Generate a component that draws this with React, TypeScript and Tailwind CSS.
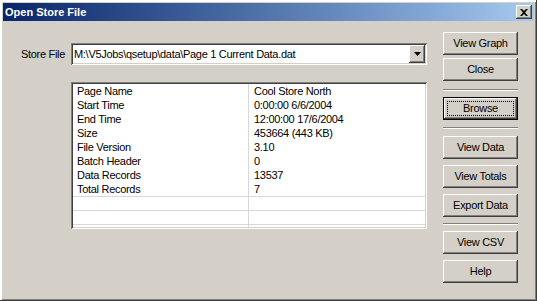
import React from 'react';

const raised =
  'shadow-[inset_-1px_-1px_#404040,inset_1px_1px_#ffffff,inset_-2px_-2px_#808080,inset_2px_2px_#d4d0c8]';
const sunken =
  'shadow-[inset_1px_1px_#808080,inset_-1px_-1px_#ffffff,inset_2px_2px_#404040,inset_-2px_-2px_#d4d0c8]';

const rows: [string, string][] = [
  ['Page Name', 'Cool Store North'],
  ['Start Time', '0:00:00 6/6/2004'],
  ['End Time', '12:00:00 17/6/2004'],
  ['Size', '453664 (443 KB)'],
  ['File Version', '3.10'],
  ['Batch Header', '0'],
  ['Data Records', '13537'],
  ['Total Records', '7'],
];

function Btn({ label, className = '' }: { label: string; className?: string }) {
  return (
    <button
      className={`w-[75px] h-[23px] bg-[#d4d0c8] text-black flex items-center justify-center ${raised} ${className}`}
    >
      {label}
    </button>
  );
}

function Sep({ className = '' }: { className?: string }) {
  return <div className={`w-[75px] h-[2px] border-t border-t-[#808080] border-b border-b-white ${className}`} />;
}

export default function App() {
  return (
    <div
      className="w-[537px] h-[301px] bg-[#d4d0c8] p-[3px] flex flex-col shadow-[inset_-1px_-1px_#404040,inset_2px_2px_#ffffff,inset_-2px_-2px_#808080] text-[11px] tracking-[-0.3px] text-black"
      style={{ fontFamily: '"Liberation Sans", Arial, sans-serif' }}
    >
      {/* title bar */}
      <div className="h-[18px] bg-linear-to-r from-[#0a246a] to-[#a6caf0] flex items-center pl-[2px] pr-[2px]">
        <span className="text-white font-bold text-[11px] tracking-normal">Open Store File</span>
        <button className={`ml-auto w-[16px] h-[14px] bg-[#d4d0c8] flex items-center justify-center ${raised}`}>
          <svg width="8" height="7" viewBox="0 0 8 7">
            <path d="M0 0h2l2 2 2-2h2L5 3.5 8 7H6L4 5 2 7H0l3-3.5z" fill="#000" />
          </svg>
        </button>
      </div>

      {/* body */}
      <div className="flex items-start pl-[18px]">
        <div className="flex flex-col mt-[22px]">
          <div className="flex items-center">
            <span className="w-[50px]">Store File</span>
            <div className={`w-[356px] h-[22px] bg-white flex items-center p-[2px] ${sunken}`}>
              <span className="flex-1 pl-[1px] whitespace-nowrap overflow-hidden">
                M:\V5Jobs\qsetup\data\Page 1 Current Data.dat
              </span>
              <div className={`w-[16px] h-[18px] bg-[#d4d0c8] flex items-center justify-center ${raised}`}>
                <svg width="7" height="4" viewBox="0 0 7 4">
                  <path d="M0 0h7L3.5 4z" fill="#000" />
                </svg>
              </div>
            </div>
          </div>

          <div className={`ml-[50px] mt-[17px] w-[356px] h-[147px] bg-white p-[2px] ${sunken}`}>
            <div className="h-full overflow-hidden flex flex-col">
              {rows.map(([k, v]) => (
                <div key={k} className="h-[14px] flex shrink-0 leading-[14px]">
                  <div className="w-[176px] pl-[4px] border-r border-r-[#d8d8d8]">{k}</div>
                  <div className="pl-[5px]">{v}</div>
                </div>
              ))}
              {[0, 1, 2].map((i) => (
                <div key={i} className="h-[14px] flex shrink-0 border-t border-t-[#d8d8d8]">
                  <div className="w-[176px] border-r border-r-[#d8d8d8]" />
                </div>
              ))}
            </div>
          </div>
        </div>

        <div className="ml-[16px] mt-[11px] flex flex-col">
          <Btn label="View Graph" />
          <Btn label="Close" className="mt-[3px]" />
          <Sep className="mt-[8px]" />
          <div className="mt-[6px] w-[75px] h-[23px] border border-black">
            <button className={`w-full h-full bg-[#d4d0c8] p-[3px] ${raised}`}>
              <div className="w-full h-full border border-dotted border-black flex items-center justify-center">
                Browse
              </div>
            </button>
          </div>
          <Sep className="mt-[7px]" />
          <Btn label="View Data" className="mt-[7px]" />
          <Btn label="View Totals" className="mt-[6px]" />
          <Btn label="Export Data" className="mt-[6px]" />
          <Sep className="mt-[6px]" />
          <Btn label="View CSV" className="mt-[6px]" />
          <Btn label="Help" className="mt-[6px]" />
        </div>
      </div>
    </div>
  );
}
